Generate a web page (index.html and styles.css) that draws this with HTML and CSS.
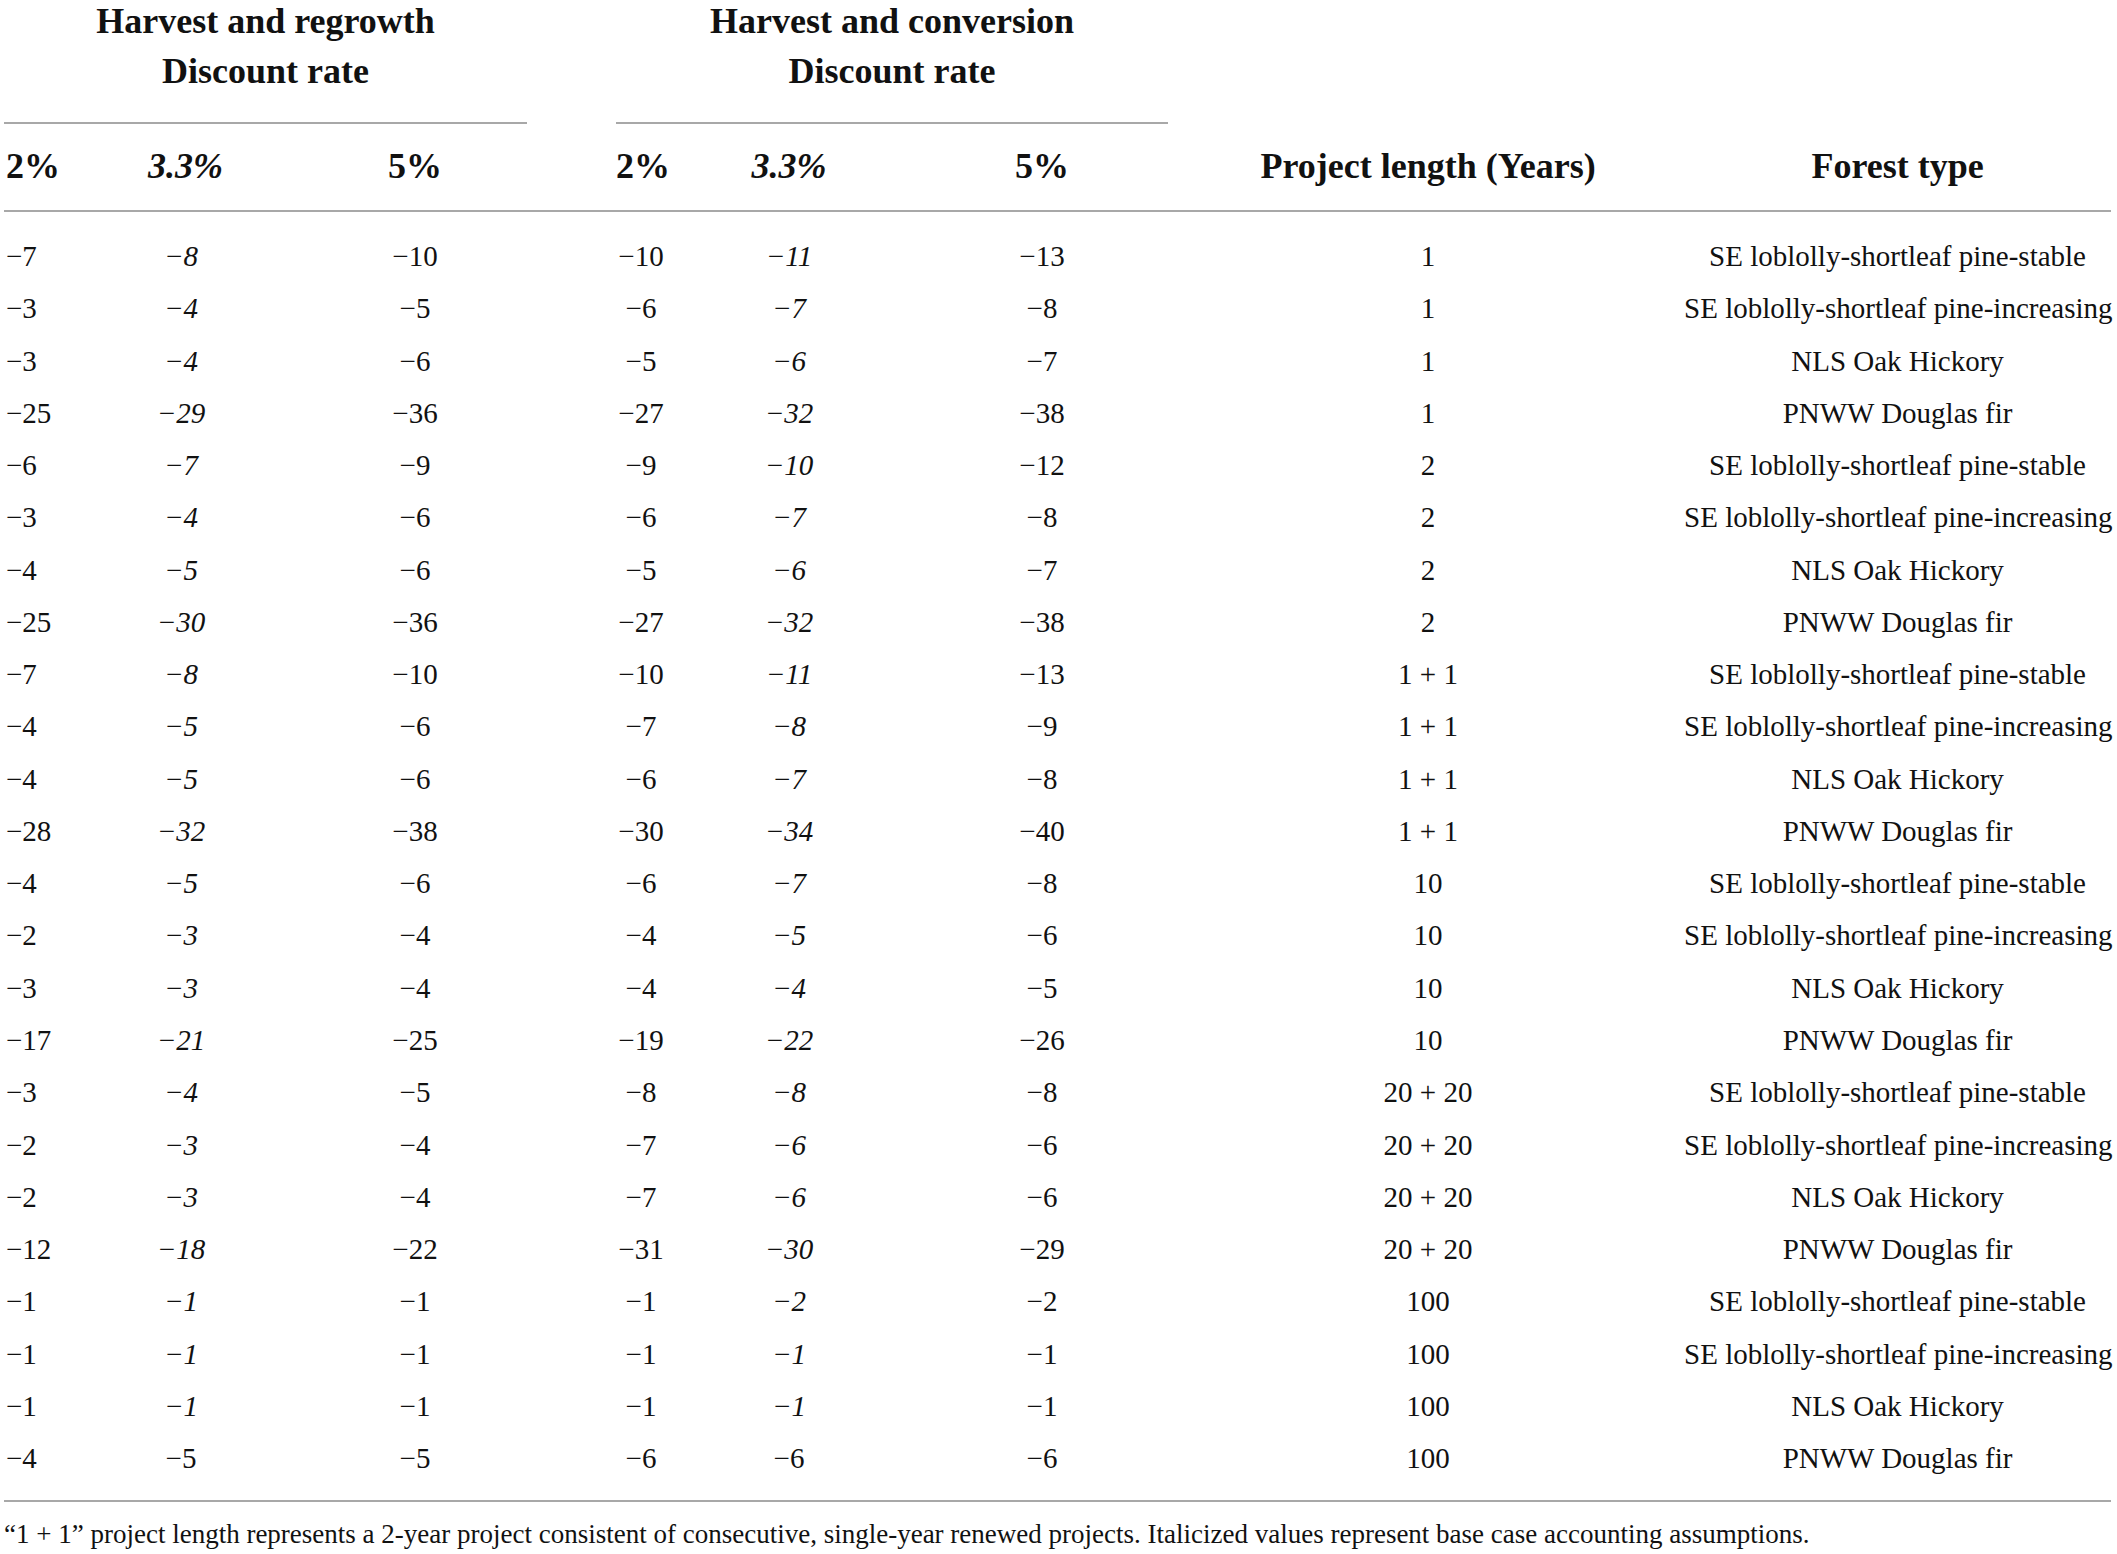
FILE: index.html
```html
<!DOCTYPE html>
<html lang="en">
<head>
<meta charset="utf-8">
<title>Table</title>
<link rel="stylesheet" href="styles.css">
</head>
<body>
<div class="sheet">
<table class="data-table">
  <colgroup>
    <col class="c1"><col class="c2"><col class="c3"><col class="c4"><col class="c5"><col class="c6"><col class="c7"><col class="c8">
  </colgroup>
  <thead>
    <tr class="group-row">
      <th colspan="3" class="group-head group-regrowth">
        <div class="group-title">Harvest and regrowth<br>Discount rate</div>
        <div class="group-rule"></div>
      </th>
      <th colspan="3" class="group-head group-conversion">
        <div class="group-title">Harvest and conversion<br>Discount rate</div>
        <div class="group-rule"></div>
      </th>
      <th colspan="2"></th>
    </tr>
    <tr class="col-head">
      <th class="first">2%</th>
      <th class="it">3.3%</th>
      <th>5%</th>
      <th>2%</th>
      <th class="it">3.3%</th>
      <th>5%</th>
      <th>Project length (Years)</th>
      <th>Forest type</th>
    </tr>
  </thead>
  <tbody>
    <tr><td>−7</td><td class="it">−8</td><td>−10</td><td>−10</td><td class="it">−11</td><td>−13</td><td>1</td><td>SE loblolly-shortleaf pine-stable</td></tr>
    <tr><td>−3</td><td class="it">−4</td><td>−5</td><td>−6</td><td class="it">−7</td><td>−8</td><td>1</td><td>SE loblolly-shortleaf pine-increasing</td></tr>
    <tr><td>−3</td><td class="it">−4</td><td>−6</td><td>−5</td><td class="it">−6</td><td>−7</td><td>1</td><td>NLS Oak Hickory</td></tr>
    <tr><td>−25</td><td class="it">−29</td><td>−36</td><td>−27</td><td class="it">−32</td><td>−38</td><td>1</td><td>PNWW Douglas fir</td></tr>
    <tr><td>−6</td><td class="it">−7</td><td>−9</td><td>−9</td><td class="it">−10</td><td>−12</td><td>2</td><td>SE loblolly-shortleaf pine-stable</td></tr>
    <tr><td>−3</td><td class="it">−4</td><td>−6</td><td>−6</td><td class="it">−7</td><td>−8</td><td>2</td><td>SE loblolly-shortleaf pine-increasing</td></tr>
    <tr><td>−4</td><td class="it">−5</td><td>−6</td><td>−5</td><td class="it">−6</td><td>−7</td><td>2</td><td>NLS Oak Hickory</td></tr>
    <tr><td>−25</td><td class="it">−30</td><td>−36</td><td>−27</td><td class="it">−32</td><td>−38</td><td>2</td><td>PNWW Douglas fir</td></tr>
    <tr><td>−7</td><td class="it">−8</td><td>−10</td><td>−10</td><td class="it">−11</td><td>−13</td><td>1 + 1</td><td>SE loblolly-shortleaf pine-stable</td></tr>
    <tr><td>−4</td><td class="it">−5</td><td>−6</td><td>−7</td><td class="it">−8</td><td>−9</td><td>1 + 1</td><td>SE loblolly-shortleaf pine-increasing</td></tr>
    <tr><td>−4</td><td class="it">−5</td><td>−6</td><td>−6</td><td class="it">−7</td><td>−8</td><td>1 + 1</td><td>NLS Oak Hickory</td></tr>
    <tr><td>−28</td><td class="it">−32</td><td>−38</td><td>−30</td><td class="it">−34</td><td>−40</td><td>1 + 1</td><td>PNWW Douglas fir</td></tr>
    <tr><td>−4</td><td class="it">−5</td><td>−6</td><td>−6</td><td class="it">−7</td><td>−8</td><td>10</td><td>SE loblolly-shortleaf pine-stable</td></tr>
    <tr><td>−2</td><td class="it">−3</td><td>−4</td><td>−4</td><td class="it">−5</td><td>−6</td><td>10</td><td>SE loblolly-shortleaf pine-increasing</td></tr>
    <tr><td>−3</td><td class="it">−3</td><td>−4</td><td>−4</td><td class="it">−4</td><td>−5</td><td>10</td><td>NLS Oak Hickory</td></tr>
    <tr><td>−17</td><td class="it">−21</td><td>−25</td><td>−19</td><td class="it">−22</td><td>−26</td><td>10</td><td>PNWW Douglas fir</td></tr>
    <tr><td>−3</td><td class="it">−4</td><td>−5</td><td>−8</td><td class="it">−8</td><td>−8</td><td>20 + 20</td><td>SE loblolly-shortleaf pine-stable</td></tr>
    <tr><td>−2</td><td class="it">−3</td><td>−4</td><td>−7</td><td class="it">−6</td><td>−6</td><td>20 + 20</td><td>SE loblolly-shortleaf pine-increasing</td></tr>
    <tr><td>−2</td><td class="it">−3</td><td>−4</td><td>−7</td><td class="it">−6</td><td>−6</td><td>20 + 20</td><td>NLS Oak Hickory</td></tr>
    <tr><td>−12</td><td class="it">−18</td><td>−22</td><td>−31</td><td class="it">−30</td><td>−29</td><td>20 + 20</td><td>PNWW Douglas fir</td></tr>
    <tr><td>−1</td><td class="it">−1</td><td>−1</td><td>−1</td><td class="it">−2</td><td>−2</td><td>100</td><td>SE loblolly-shortleaf pine-stable</td></tr>
    <tr><td>−1</td><td class="it">−1</td><td>−1</td><td>−1</td><td class="it">−1</td><td>−1</td><td>100</td><td>SE loblolly-shortleaf pine-increasing</td></tr>
    <tr><td>−1</td><td class="it">−1</td><td>−1</td><td>−1</td><td class="it">−1</td><td>−1</td><td>100</td><td>NLS Oak Hickory</td></tr>
    <tr><td>−4</td><td>−5</td><td>−5</td><td>−6</td><td>−6</td><td>−6</td><td>100</td><td>PNWW Douglas fir</td></tr>
  </tbody>
</table>
<p class="note">“1 + 1” project length represents a 2-year project consistent of consecutive, single-year renewed projects. Italicized values represent base case accounting assumptions.</p>
</div>
</body>
</html>
```

FILE: styles.css
```css
html, body {
  margin: 0;
  padding: 0;
  background: #ffffff;
}

body {
  font-family: "Liberation Serif", "Times New Roman", serif;
  color: #111111;
}

.sheet {
  padding-left: 4px;
  width: 2107px;
}

.data-table {
  table-layout: fixed;
  width: 2107px;
  border-collapse: separate;
  border-spacing: 0;
}

.c1 { width: 144px; }
.c2 { width: 66px; }
.c3 { width: 402px; }
.c4 { width: 50px; }
.c5 { width: 246px; }
.c6 { width: 260px; }
.c7 { width: 512px; }
.c8 { width: 427px; }

.data-table th,
.data-table td {
  padding: 0;
  white-space: nowrap;
}

.group-head {
  font-size: 36px;
  font-weight: bold;
  text-align: center;
  vertical-align: top;
}

.group-title {
  line-height: 50px;
  margin-top: -4px;
}

.group-rule {
  margin-top: 26px;
  border-top: 2px solid #a8a8a8;
}

.group-regrowth .group-title,
.group-regrowth .group-rule {
  margin-right: 89px;
}

.group-conversion .group-title,
.group-conversion .group-rule {
  margin-right: 4px;
}

.col-head th {
  font-size: 36px;
  font-weight: bold;
  line-height: 42px;
  text-align: center;
  padding: 21px 0 23px;
  border-bottom: 2px solid #a8a8a8;
}

.col-head th.first {
  text-align: left;
  padding-left: 2px;
}

.data-table td {
  font-size: 29px;
  line-height: 52.26px;
  text-align: center;
}

.data-table td:first-child {
  text-align: left;
  padding-left: 2px;
}

.data-table tbody tr:first-child td {
  padding-top: 18px;
}

.data-table tbody tr:last-child td {
  padding-bottom: 16px;
  border-bottom: 2px solid #a8a8a8;
}

.it {
  font-style: italic;
}

.note {
  font-size: 27px;
  line-height: 32px;
  margin: 16px 0 0;
  white-space: nowrap;
}
```
